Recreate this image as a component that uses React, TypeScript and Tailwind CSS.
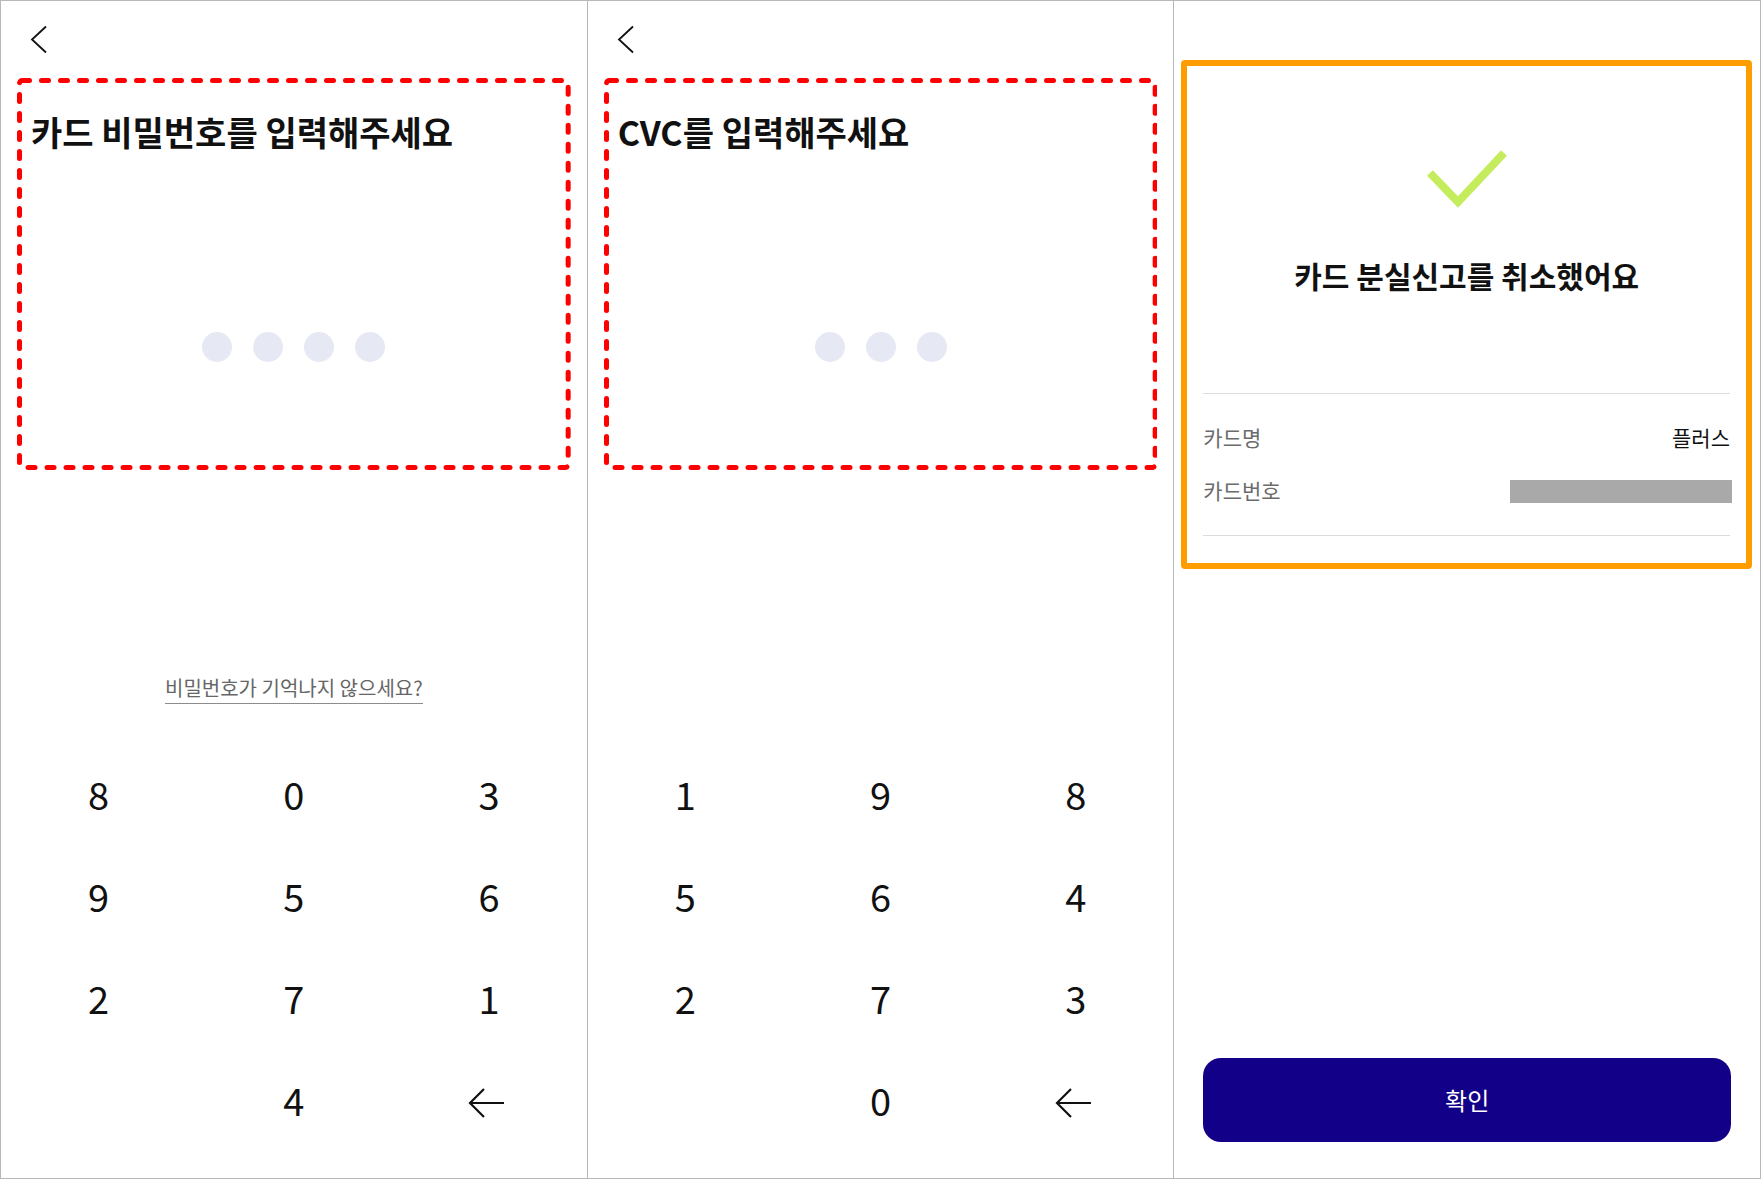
function Chevron() {
  return (
    <svg width="18" height="30" viewBox="0 0 18 30" fill="none">
      <polyline points="16,1.5 2,14.5 16,27.5" stroke="#111" strokeWidth="1.8" />
    </svg>
  );
}

function BackspaceArrow() {
  return (
    <svg className="mr-[6px] mt-[8px]" width="38" height="32" viewBox="0 0 38 32" fill="none">
      <path d="M37 16H3M17 2L3 16L17 30" stroke="#111" strokeWidth="2.2" />
    </svg>
  );
}

function DashedFrame() {
  return (
    <svg className="pointer-events-none absolute inset-0 h-full w-full" preserveAspectRatio="none">
      <rect
        x="2.5"
        y="2.5"
        width="calc(100% - 5px)"
        height="calc(100% - 5px)"
        rx="3"
        fill="none"
        stroke="#ff0000"
        strokeWidth="5"
        strokeDasharray="7 12"
        strokeLinecap="round"
      />
    </svg>
  );
}

function Dots({ count }: { count: number }) {
  return (
    <div className="mt-[180px] flex justify-center gap-[21px]">
      {Array.from({ length: count }).map((_, i) => (
        <span key={i} className="h-[30px] w-[30px] rounded-full bg-[#e6e9f4]" />
      ))}
    </div>
  );
}

function Keypad({ keys }: { keys: string[] }) {
  return (
    <div className="mt-auto grid grid-cols-3 pb-[28px]">
      {keys.map((k, i) => (
        <div key={i} className="flex h-[102px] items-center justify-center text-[38px] font-normal text-[#111]">
          {k === "back" ? <BackspaceArrow /> : k}
        </div>
      ))}
    </div>
  );
}

function PinPanel({
  title,
  dots,
  keys,
  forgot,
}: {
  title: string;
  dots: number;
  keys: string[];
  forgot?: boolean;
}) {
  return (
    <section className="flex h-full flex-1 flex-col bg-white">
      <div className="pl-[29px] pt-[24px]">
        <Chevron />
      </div>
      <div className="relative mx-[16px] mt-[23px] h-[392px]">
        <DashedFrame />
        <h1 className="pl-[14px] pt-[34px] text-[34px] font-bold leading-[40px] text-[#111]">
          {title}
        </h1>
        <Dots count={dots} />
      </div>
      {forgot && (
        <div className="mt-[205px] flex justify-center">
          <span className="border-b-[1.5px] border-[#8c8c8c] pb-[2px] text-[20px] leading-[26px] text-[#666]">
            비밀번호가 기억나지 않으세요?
          </span>
        </div>
      )}
      <Keypad keys={keys} />
    </section>
  );
}

function ResultPanel() {
  return (
    <section className="flex h-full flex-1 flex-col bg-white">
      <div className="ml-[7px] mr-[8px] mt-[59px] rounded-[4px] border-[6px] border-[#ff9c00] px-[16px]">
        <div className="mt-[83px] flex justify-center">
          <svg width="84" height="60" viewBox="0 0 84 60" fill="none">
            <polyline points="5,24 33,53 79,4" stroke="#c4ec5c" strokeWidth="8" strokeLinejoin="miter" />
          </svg>
        </div>
        <h2 className="mt-[48px] text-center text-[30px] font-bold leading-[36px] text-[#111]">
          카드 분실신고를 취소했어요
        </h2>
        <div className="mt-[100px] border-t border-[#dcdcdc]" />
        <div className="flex flex-col gap-[25px] py-[30px]">
          <div className="flex h-[28px] items-center justify-between text-[21px]">
            <span className="text-[#6b6b6b]">카드명</span>
            <span className="text-[#111]">플러스</span>
          </div>
          <div className="flex h-[28px] items-center justify-between text-[21px]">
            <span className="text-[#6b6b6b]">카드번호</span>
            <span className="mr-[-2px] h-[23px] w-[222px] bg-[#a9a9a9]" />
          </div>
        </div>
        <div className="mb-[27px] border-t border-[#dcdcdc]" />
      </div>
      <button className="mx-[29px] mb-[36px] mt-auto h-[84px] rounded-[18px] bg-[#130088] text-[24px] text-white">
        확인
      </button>
    </section>
  );
}

export default function App() {
  return (
    <main className="flex h-[1179px] w-[1761px] divide-x divide-[#b8b8b8] border border-[#b8b8b8] bg-white font-['Noto_Sans_CJK_KR',sans-serif]">
      <PinPanel
        title="카드 비밀번호를 입력해주세요"
        dots={4}
        forgot
        keys={["8", "0", "3", "9", "5", "6", "2", "7", "1", "", "4", "back"]}
      />
      <PinPanel
        title="CVC를 입력해주세요"
        dots={3}
        keys={["1", "9", "8", "5", "6", "4", "2", "7", "3", "", "0", "back"]}
      />
      <ResultPanel />
    </main>
  );
}
